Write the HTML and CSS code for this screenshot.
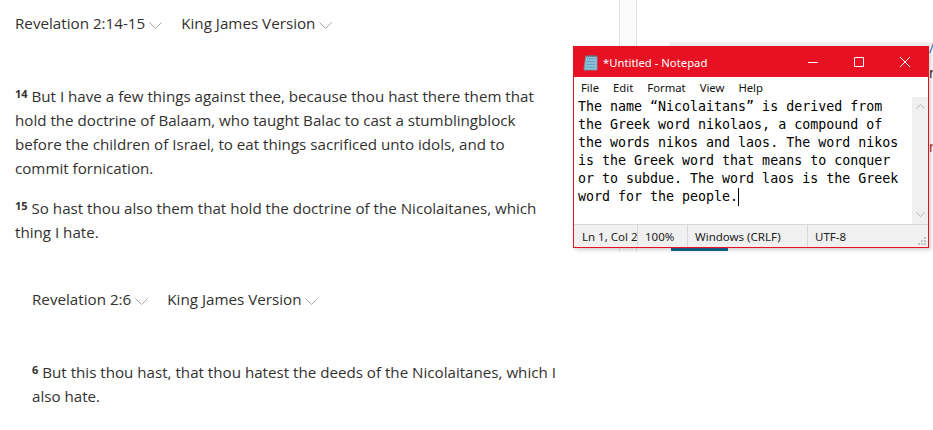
FILE: index.html
```html
<!DOCTYPE html>
<html lang="en">
  <head>
    <meta charset="UTF-8" />
    <title>Revelation 2</title>
    <link rel="stylesheet" href="styles.css">
  </head>
  <body>
    <main class="passages">
      <section class="passage">
        <div class="passage-head">
          <span class="picker">Revelation 2:14-15
            <svg class="chevron" viewBox="0 0 13 7"><path d="M.5.5l6 6 6-6" /></svg>
          </span>
          <span class="picker">King James Version
            <svg class="chevron" viewBox="0 0 13 7"><path d="M.5.5l6 6 6-6" /></svg>
          </span>
        </div>
        <p class="verse"><sup>14</sup> But I have a few things against thee, because thou hast there them that hold the doctrine of Balaam, who taught Balac to cast a stumblingblock before the children of Israel, to eat things sacrificed unto idols, and to commit fornication.</p>
        <p class="verse"><sup>15</sup> So hast thou also them that hold the doctrine of the Nicolaitanes, which thing I hate.</p>
      </section>
      <section class="passage passage-indent">
        <div class="passage-head">
          <span class="picker">Revelation 2:6
            <svg class="chevron" viewBox="0 0 13 7"><path d="M.5.5l6 6 6-6" /></svg>
          </span>
          <span class="picker">King James Version
            <svg class="chevron" viewBox="0 0 13 7"><path d="M.5.5l6 6 6-6" /></svg>
          </span>
        </div>
        <p class="verse"><sup>6</sup> But this thou hast, that thou hatest the deeds of the Nicolaitanes, which I also hate.</p>
      </section>
    </main>

    <!-- what shows behind the notepad window -->
    <div class="behind-column"></div>
    <div class="behind-band"></div>
    <div class="behind-tab"></div>
    <div class="behind-text">
      <span class="frag-blue">/</span>
      <span class="frag-dark">n</span>
      <span class="frag-red">r</span>
    </div>

    <div class="notepad">
      <div class="titlebar">
        <svg class="app-icon" viewBox="0 0 16 18">
          <path d="M3 2h12v15H1z" fill="#8fc4dc" stroke="#7d8f9c" />
          <path d="M4 5h9M3.6 8h9.4M3.2 11h9.8M2.8 14h10" stroke="#5f9dbd" />
          <path d="M4 1v2M6 1v2M8 1v2M10 1v2M12 1v2M14 1v2" stroke="#555" />
        </svg>
        <span class="win-title">*Untitled - Notepad</span>
        <div class="win-buttons">
          <svg viewBox="0 0 10 10"><path d="M0 5.5h10" /></svg>
          <svg viewBox="0 0 10 10"><path d="M.5.5h9v9h-9z" /></svg>
          <svg viewBox="0 0 10 10"><path d="M0 0l10 10M10 0L0 10" /></svg>
        </div>
      </div>
      <div class="menubar">
        <span>File</span><span>Edit</span><span>Format</span><span>View</span><span>Help</span>
      </div>
      <div class="editor">
        <div class="editor-text">The name “Nicolaitans” is derived from
the Greek word nikolaos, a compound of
the words nikos and laos. The word nikos
is the Greek word that means to conquer
or to subdue. The word laos is the Greek
word for the people.<span class="caret"></span></div>
        <div class="scrollbar">
          <svg viewBox="0 0 9 5"><path d="M.5 4.5l4-4 4 4" /></svg>
          <svg viewBox="0 0 9 5"><path d="M.5.5l4 4 4-4" /></svg>
        </div>
      </div>
      <div class="statusbar">
        <span class="st-pos">Ln 1, Col 2</span>
        <span class="st-zoom">100%</span>
        <span class="st-eol">Windows (CRLF)</span>
        <span class="st-enc">UTF-8</span>
        <svg class="grip" viewBox="0 0 10 10">
          <path d="M7 1h2v2H7zM4 4h2v2H4zM7 4h2v2H7zM1 7h2v2H1zM4 7h2v2H4zM7 7h2v2H7z" />
        </svg>
      </div>
    </div>
  </body>
</html>
```

FILE: styles.css
```css
body {
  margin: 0;
  height: 430px;
  overflow: hidden;
  position: relative;
  background: #fff;
  color: #323130;
  font-family: "Open Sans", "Noto Sans", sans-serif;
}

.passages {
  width: 560px;
  padding-top: 12px;
}

.passage {
  padding: 0 15px;
}

.passage-indent {
  padding: 28px 0 0 32px;
  width: 528px;
}

.passage-head {
  display: flex;
  gap: 19px;
  font-size: 15.2px;
  line-height: 22px;
  margin-bottom: 50px;
}

.picker {
  white-space: nowrap;
}

.chevron {
  width: 13px;
  height: 7px;
  fill: none;
  stroke: #a6a6a6;
}

.verse {
  margin: 0 0 16px;
  font-size: 15.15px;
  line-height: 24px;
}

.verse sup {
  font-size: 11px;
  font-weight: 700;
  line-height: 0;
  vertical-align: 4px;
}

/* Фон за окном блокнота */
.behind-column {
  position: absolute;
  left: 619px;
  top: 0;
  width: 16px;
  height: 251px;
  background: #fbfbfb;
  border-left: 1px solid #e1dfdd;
  border-right: 1px solid #e1dfdd;
}

.behind-band {
  position: absolute;
  left: 669px;
  right: 0;
  top: 42px;
  height: 4px;
  background: #efefef;
}

.behind-tab {
  position: absolute;
  left: 671px;
  top: 248px;
  width: 57px;
  height: 3px;
  background: #16688f;
}

.behind-text {
  position: absolute;
  left: 929px;
  top: 40px;
  width: 4px;
  overflow: hidden;
  display: flex;
  flex-direction: column;
  font-size: 14px;
  line-height: 16px;
}

.frag-blue {
  color: #106ebe;
}

.frag-dark {
  margin-top: 9px;
  color: #1b1a19;
}

.frag-red {
  margin-top: 58px;
  color: #a4262c;
}

/* Окно */
.notepad {
  position: absolute;
  left: 573px;
  top: 46px;
  width: 354px;
  height: 200px;
  border: 1px solid #e81123;
  background: #fff;
  display: flex;
  flex-direction: column;
  font-family: "Noto Sans", "Open Sans", sans-serif;
  box-shadow: 2px 2px 4px rgba(0, 0, 0, 0.18);
}

.titlebar {
  height: 30px;
  background: #e81123;
  color: #fff;
  display: flex;
  align-items: center;
  padding-left: 9px;
  font-size: 11.3px;
}

.app-icon {
  width: 15px;
  height: 17px;
  margin-right: 5px;
}

.win-title {
  flex: 1;
}

.win-buttons {
  display: flex;
}

.win-buttons svg {
  width: 10px;
  height: 10px;
  padding: 0 18px;
  fill: none;
  stroke: #fff;
}

.menubar {
  height: 20px;
  display: flex;
  align-items: center;
  gap: 14px;
  padding-left: 7px;
  font-size: 11.3px;
  color: #111;
}

.editor {
  flex: 1;
  display: flex;
  min-height: 0;
}

.editor-text {
  flex: 1;
  padding: 1px 0 0 4px;
  font-family: "DejaVu Sans Mono", monospace;
  font-size: 13.3px;
  line-height: 18px;
  white-space: pre;
  color: #000;
}

.caret {
  display: inline-block;
  width: 1px;
  height: 18px;
  background: #000;
  vertical-align: top;
}

.scrollbar {
  width: 16px;
  background: #f0f0f0;
  display: flex;
  flex-direction: column;
  justify-content: space-between;
  align-items: center;
  padding: 7px 0;
  box-sizing: border-box;
}

.scrollbar svg {
  width: 9px;
  height: 5px;
  fill: none;
  stroke: #b5b5b5;
}

.statusbar {
  height: 22px;
  background: #f0f0f0;
  border-top: 1px solid #d7d7d7;
  display: flex;
  align-items: center;
  font-size: 11.5px;
  color: #222;
  position: relative;
}

.statusbar span {
  height: 100%;
  display: flex;
  align-items: center;
  box-sizing: border-box;
  border-left: 1px solid #d7d7d7;
  white-space: nowrap;
}

.statusbar .st-pos {
  width: 63px;
  padding-left: 8px;
  border-left: none;
}

.st-zoom {
  width: 50px;
  padding-left: 7px;
}

.st-eol {
  width: 120px;
  padding-left: 7px;
}

.st-enc {
  padding-left: 7px;
}

.grip {
  position: absolute;
  right: 1px;
  bottom: 1px;
  width: 10px;
  height: 10px;
  fill: #c4c4c4;
}
```
